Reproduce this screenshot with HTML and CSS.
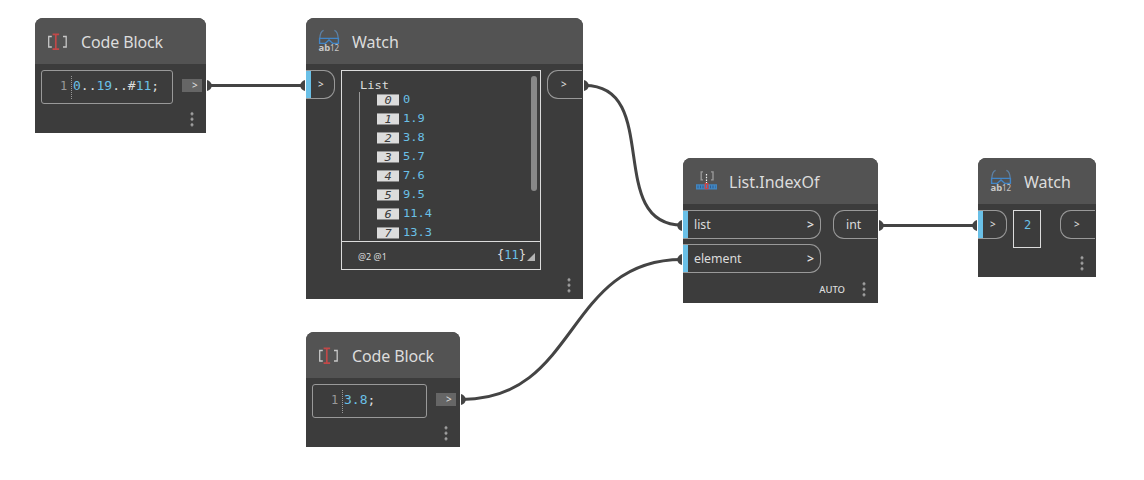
FILE: index.html
```html
<!DOCTYPE html>
<html lang="en">
<head>
<meta charset="utf-8">
<title>Node graph</title>
<link rel="stylesheet" href="styles.css">
</head>
<body>
<svg class="defs" width="0" height="0" aria-hidden="true">
  <symbol id="code" viewBox="0 0 24 24">
    <path d="M5.800 6.500H2.700v10.500h3.100M17 6.500h3.200v10.500H17" fill="none" stroke="#c8c8c8" stroke-width="1.300"/>
    <path d="M6.600 4.300h6.500M9.800 4.300v14.900M6.600 19.200h6.500" fill="none" stroke="#c24848" stroke-width="1.700"/>
  </symbol>
  <symbol id="watch" viewBox="0 0 24 26">
    <path d="M6.600 1.300C4 2 3 6 2.800 9.500M17.400 1.300c2.600.700 3.600 4.700 3.800 8.200" fill="none" stroke="#5c82a8" stroke-width="1.300"/>
    <path d="M2.600 9.400h18.800v5h-5.600L12 11 8.200 14.400H2.600z" fill="none" stroke="#4286c8" stroke-width="1.400"/>
    <text x="1.600" y="22.300" class="icon-ab">ab</text><text x="12.900" y="22.300" class="icon-num">12</text>
  </symbol>
  <symbol id="index" viewBox="0 0 24 26">
    <path d="M9 2.900H7.200v8H9M17 2.900h2v8h-2" fill="none" stroke="#999" stroke-width="1.400"/>
    <path d="M2 15.200h21v5.400H2z" fill="#4286c0"/>
    <path d="M3.500 17.800h18" stroke="#2d5f94" stroke-width="2.800" stroke-dasharray="1 1.500"/>
    <path d="M12.500 5v9" stroke="#f0f0f0" stroke-width="1.200" stroke-dasharray="1.500 1.200"/>
    <path d="M11.300 14.600h2.500v5h-2.500z" fill="none" stroke="#d04444" stroke-width="1.400"/>
  </symbol>
</svg>
<main class="canvas">
  <svg class="wires" width="1144" height="480">
    <g class="wire">
      <path d="M208 85.500H304"/>
      <path d="M585 85.500C662 85.500 605 225 682 225"/>
      <path d="M462 399.500C579 399.500 565 259.500 682 259.500"/>
      <path d="M880 225.500H977"/>
    </g>
    <g class="plug">
      <path d="M207 80q4 1 5 5.500q-1 4.500-5 5.500z"/>
      <path d="M584 80q4 1 5 5.500q-1 4.500-5 5.500z"/>
      <path d="M461 394q4 1 5 5.500q-1 4.500-5 5.500z"/>
      <path d="M879 220q4 1 5 5.500q-1 4.500-5 5.500z"/>
      <path d="M305 80q-4 1-5 5.500q1 4.500 5 5.500z"/>
      <path d="M682 220q-4 1-5 5.500q1 4.500 5 5.500z"/>
      <path d="M682 254q-4 1-5 5.500q1 4.500 5 5.500z"/>
      <path d="M977 220q-4 1-5 5.500q1 4.500 5 5.500z"/>
    </g>
  </svg>

  <section class="node range">
    <header class="head"><svg class="icon"><use href="#code"/></svg><h2 class="snug">Code Block</h2></header>
    <div class="body">
      <div class="editor"><span class="line">1</span><code><b>0</b>..<b>19</b>..#<b>11</b>;</code></div>
      <span class="tab">&gt;</span>
    </div>
    <footer class="foot"><i class="dots"></i></footer>
  </section>

  <section class="node watch-list">
    <header class="head"><svg class="icon tall"><use href="#watch"/></svg><h2>Watch</h2></header>
    <div class="body">
      <span class="port in small">&gt;</span>
      <div class="viewer">
        <div class="tree">
          <div class="root">List</div>
          <ol class="items">
            <li><em>0</em>0</li><li><em>1</em>1.9</li><li><em>2</em>3.8</li><li><em>3</em>5.7</li>
            <li><em>4</em>7.6</li><li><em>5</em>9.5</li><li><em>6</em>11.4</li><li><em>7</em>13.3</li>
          </ol>
          <i class="scroll"></i>
        </div>
        <div class="summary"><span class="levels">@2 @1</span><span class="count">{<b>11</b>}</span><i class="grip"></i></div>
      </div>
      <span class="port out small">&gt;</span>
    </div>
    <footer class="foot"><i class="dots"></i></footer>
  </section>

  <section class="node value">
    <header class="head"><svg class="icon"><use href="#code"/></svg><h2 class="snug">Code Block</h2></header>
    <div class="body">
      <div class="editor"><span class="line">1</span><code><b>3.8</b>;</code></div>
      <span class="tab">&gt;</span>
    </div>
    <footer class="foot"><i class="dots"></i></footer>
  </section>

  <section class="node index-of">
    <header class="head"><svg class="icon tall"><use href="#index"/></svg><h2>List.IndexOf</h2></header>
    <div class="body">
      <div class="inputs">
        <span class="port in wide">list<b>&gt;</b></span>
        <span class="port in wide">element<b>&gt;</b></span>
      </div>
      <span class="port out named">int</span>
    </div>
    <footer class="foot"><span class="lacing">AUTO</span><i class="dots"></i></footer>
  </section>

  <section class="node watch-value">
    <header class="head"><svg class="icon tall"><use href="#watch"/></svg><h2>Watch</h2></header>
    <div class="body">
      <span class="port in small">&gt;</span>
      <div class="result">2</div>
      <span class="port out small">&gt;</span>
    </div>
    <footer class="foot"><i class="dots"></i></footer>
  </section>
</main>
</body>
</html>
```
FILE: styles.css
```css
* { box-sizing: border-box; }
body { margin: 0; background: #fff; font-family: "Noto Sans", sans-serif; }
.defs { position: absolute; overflow: visible; }
.canvas { position: relative; width: 1144px; height: 480px; overflow: hidden; }
.wires { display: block; }
.wire { fill: none; stroke: #444; stroke-width: 3; }
.plug { fill: #444; }

.node {
  position: absolute;
  display: flex;
  flex-direction: column;
  background: #3c3c3c;
  color: #dcdcdc;
  border-radius: 8px 8px 0 0;
  overflow: hidden;
}
.range { left: 35px; top: 18px; width: 171px; height: 115px; }
.watch-list { left: 306px; top: 18px; width: 277px; height: 281px; }
.value { left: 306px; top: 332px; width: 154px; height: 115px; }
.index-of { left: 683px; top: 158px; width: 195px; height: 145px; }
.watch-value { left: 978px; top: 158px; width: 118px; height: 119px; }

.head {
  flex: none;
  display: flex;
  align-items: center;
  gap: 11px;
  height: 46px;
  padding: 2px 0 0 11px;
  background: #535353;
}
.head h2 { margin: 0; font-size: 16px; font-weight: 400; line-height: 22px; }
.head .snug { letter-spacing: -0.120px; }
.icon { width: 24px; height: 24px; }
.icon.tall { height: 26px; }
.icon-ab { font: bold 9.500px "Noto Sans", sans-serif; fill: #c8c8c8; }
.icon-num { font: 8px "Noto Sans", sans-serif; fill: #c8c8c8; }

.body { display: flex; align-items: flex-start; padding-top: 6px; }
.editor {
  display: flex;
  align-items: center;
  width: 132px;
  height: 34px;
  margin-left: 6px;
  padding: 0 0 3px 18px;
  border: 1px solid #999;
  border-radius: 3px;
  font: 13px/20px "DejaVu Sans Mono", monospace;
}
.value .editor { width: 115px; }
.line { width: 12px; margin-top: 3px; height: 23px; line-height: 20px; border-right: 1px dotted #999; color: #999; font-size: 12px; }
.editor code { padding-left: 1px; font: inherit; white-space: pre; transform: scaleY(0.9); }
.editor b, .count b { font-weight: 400; color: #6ac0e7; }
.tab {
  width: 20px;
  height: 13px;
  margin: 9px 0 0 9px;
  padding-left: 10px;
  background: #666;
  font-size: 10px;
  font-weight: 500;
  line-height: 13px;
}

.port { flex: none; height: 29px; border: 1px solid #999; line-height: 27px; }
.port.in {
  border-left: 0;
  border-radius: 0 11px 11px 0;
  background: linear-gradient(#6ac0e7, #6ac0e7) left / 5px 100% no-repeat;
}
.port.small { font-size: 10px; font-weight: 500; }
.port.in.small { width: 29px; padding-left: 12px; }
.port.out { border-right: 0; border-radius: 11px 0 0 11px; }
.port.out.small { width: 35px; padding-left: 13px; margin-right: 1px; }
.inputs { display: grid; gap: 5px; }
.port.wide { display: flex; justify-content: space-between; width: 138px; padding: 0 6px 0 11px; font-size: 12.300px; }
.port.wide b { font-weight: 600; }
.port.named { width: 44px; margin-left: 12px; padding-left: 12px; font-size: 12.300px; }

.viewer {
  width: 200px;
  height: 200px;
  margin: 0 6px;
  border: 1px solid #dcdcdc;
  font: 12px/19px "DejaVu Sans Mono", monospace;
}
.tree { position: relative; height: 171px; padding: 5px 0 0 17px; border-bottom: 1px solid #dcdcdc; overflow: hidden; }
.root { height: 16px; padding-left: 1px; transform: scaleY(0.92); }
.items { list-style: none; height: 148px; margin: 0; padding: 0 0 0 17px; border-left: 1px solid #999; color: #6ac0e7; }
.items li { display: flex; align-items: center; height: 19px; transform: translateY(-2px) scaleY(0.92); }
.items em { width: 22px; height: 12px; margin-right: 4px; background: #dcdcdc; color: #3c3c3c; line-height: 12px; text-align: center; }
.scroll { position: absolute; right: 3px; top: 5px; width: 6px; height: 115px; border-radius: 3px; background: #888; }
.summary { display: flex; align-items: center; height: 27px; padding: 0 5px 0 16px; }
.levels { margin-top: 1px; font: 9px "Noto Sans", sans-serif; }
.count { margin-left: auto; }
.grip { width: 8px; height: 8px; margin: 3px 0 0 1px; background: #b4b4b4; clip-path: polygon(100% 0, 100% 100%, 0 100%); }
.result { width: 28px; height: 38px; margin: 0 19px 0 6px; padding-left: 10px; border: 1px solid #dcdcdc; color: #6ac0e7; font: 12px/29px "DejaVu Sans Mono", monospace; }

.foot { display: flex; justify-content: flex-end; align-items: center; gap: 17px; height: 28px; margin-top: auto; padding-right: 12px; }
.dots {
  width: 4px;
  height: 16px;
  background: radial-gradient(circle at 50% 50%, #a0a0a0 1.200px, transparent 1.800px) 0 0 / 4px 5.500px;
}
.lacing { font-size: 9.500px; font-weight: 500; }
```
